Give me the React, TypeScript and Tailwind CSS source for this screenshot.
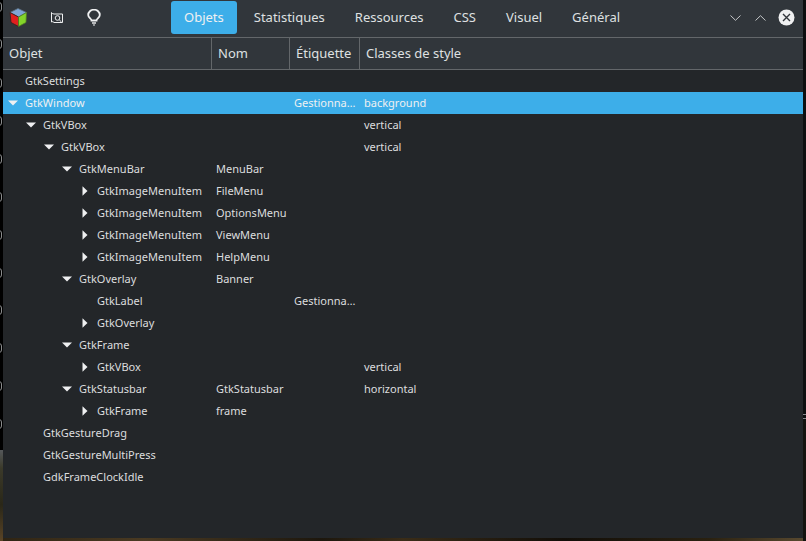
const font = { fontFamily: '"Noto Sans", sans-serif' };

type Row = {
  level: number;
  name: string;
  arrow?: "down" | "right";
  nom?: string;
  etiq?: string;
  cls?: string;
  selected?: boolean;
};

const rows: Row[] = [
  { level: 0, name: "GtkSettings" },
  { level: 0, name: "GtkWindow", arrow: "down", etiq: "Gestionna…", cls: "background", selected: true },
  { level: 1, name: "GtkVBox", arrow: "down", cls: "vertical" },
  { level: 2, name: "GtkVBox", arrow: "down", cls: "vertical" },
  { level: 3, name: "GtkMenuBar", arrow: "down", nom: "MenuBar" },
  { level: 4, name: "GtkImageMenuItem", arrow: "right", nom: "FileMenu" },
  { level: 4, name: "GtkImageMenuItem", arrow: "right", nom: "OptionsMenu" },
  { level: 4, name: "GtkImageMenuItem", arrow: "right", nom: "ViewMenu" },
  { level: 4, name: "GtkImageMenuItem", arrow: "right", nom: "HelpMenu" },
  { level: 3, name: "GtkOverlay", arrow: "down", nom: "Banner" },
  { level: 4, name: "GtkLabel", etiq: "Gestionna…" },
  { level: 4, name: "GtkOverlay", arrow: "right" },
  { level: 3, name: "GtkFrame", arrow: "down" },
  { level: 4, name: "GtkVBox", arrow: "right", cls: "vertical" },
  { level: 3, name: "GtkStatusbar", arrow: "down", nom: "GtkStatusbar", cls: "horizontal" },
  { level: 4, name: "GtkFrame", arrow: "right", nom: "frame" },
  { level: 1, name: "GtkGestureDrag" },
  { level: 1, name: "GtkGestureMultiPress" },
  { level: 1, name: "GdkFrameClockIdle" },
];

const tabs = ["Objets", "Statistiques", "Ressources", "CSS", "Visuel", "Général"];
const ringY = [2, 39, 78, 116, 154, 192, 230, 268, 305, 343, 381, 419];

function Cube() {
  return (
    <svg width="18" height="19" viewBox="0 0 18 19" className="block">
      <path d="M9 0.5 L17.5 4.5 L9.5 9 L1 4.5 Z" fill="#7fa6d4" stroke="#5b6f80" strokeWidth="0.8" />
      <path d="M1 4.5 L9.5 9 L9.5 18.5 L2 14.5 Z" fill="#e0201f" stroke="#3a2020" strokeWidth="0.9" />
      <path d="M17.5 4.5 L9.5 9 L9.5 18.5 L17 14.5 Z" fill="#83d42a" stroke="#4f7a22" strokeWidth="0.8" />
    </svg>
  );
}

function InspectIcon() {
  return (
    <svg width="14" height="14" viewBox="0 0 14 14" fill="none" stroke="#eff0f1" strokeWidth="1" className="block">
      <path d="M1.5 1.5 L1.5 11 Q3 10 4 11.5 L12.5 11.5 L12.5 3 L4 3 Q2.5 3 1.5 1.5 Z" />
      <circle cx="7.5" cy="7" r="2.3" />
      <path d="M9.2 8.8 L11.5 11" />
    </svg>
  );
}

function BulbIcon() {
  return (
    <svg width="14" height="17" viewBox="0 0 14 17" fill="none" stroke="#eff0f1" className="block">
      <path d="M4.5 11.5 C4.5 9.8 1.2 8.8 1.2 6 A5.8 5.3 0 0 1 12.8 6 C12.8 8.8 9.5 9.8 9.5 11.5 Z" strokeWidth="1.8" />
      <path d="M5 14 L9 14" strokeWidth="1.4" />
      <path d="M6 16 L8 16" strokeWidth="1.2" />
    </svg>
  );
}

function Chevron({ up }: { up?: boolean }) {
  return (
    <svg width="11" height="6" viewBox="0 0 11 6" fill="none" stroke="#c4c6c8" strokeWidth="1" className="block">
      <path d={up ? "M0.5 5.5 L5.5 0.7 L10.5 5.5" : "M0.5 0.5 L5.5 5.3 L10.5 0.5"} />
    </svg>
  );
}

function CloseIcon() {
  return (
    <svg width="17" height="17" viewBox="0 0 17 17" className="block">
      <circle cx="8.5" cy="8.5" r="8" fill="#eff0f1" />
      <path d="M5 5 L12 12 M12 5 L5 12" stroke="#31363b" strokeWidth="1.4" />
    </svg>
  );
}

function Arrow({ dir }: { dir: "down" | "right" }) {
  return (
    <svg width="10" height="10" viewBox="0 0 10 10" fill="#eff0f1" className="block">
      <path d={dir === "down" ? "M0 2.5 L10 2.5 L5 7.5 Z" : "M2.5 0.3 L7.5 5 L2.5 9.7 Z"} />
    </svg>
  );
}

export default function App() {
  return (
    <div
      style={font}
      className="relative w-[806px] h-[541px] overflow-hidden bg-[linear-gradient(90deg,#2f2413_0%,#4a3a22_18%,#1d170d_40%,#3a2c17_50%,#120e08_70%,#2a2110_88%,#5a4a30_100%)]"
    >
      <div className="absolute left-0 top-0 w-[3px] h-[450px] bg-black" />
      <div className="absolute right-0 top-0 w-[3px] h-[420px] bg-[#0d0f10]" />
      <div className="absolute left-0 top-[450px] w-[3px] h-[91px] bg-[linear-gradient(180deg,#55585a_0%,#3b3a2a_20%,#2a2718_60%,#5a4426_100%)]" />
      <div className="absolute right-0 top-[420px] w-[3px] h-[121px] bg-[#14130f]" />
      {ringY.map((y) => (
        <div
          key={y}
          style={{ top: y }}
          className="absolute left-[-4px] w-[6px] h-[10px] rounded-full border border-[#8b8d8e]"
        />
      ))}
      <div className="absolute right-0 top-[414px] w-[3px] h-[5px] border-y border-[#85878a]" />

      <div className="absolute left-[3px] top-0 w-[800px] h-[538px] flex flex-col bg-[#232629] text-[#eff0f1]">
        {/* Header bar */}
        <div className="h-[37px] shrink-0 flex items-center bg-[#31363b] text-[13px]">
          <div className="w-[168px] mb-[2px] flex items-center">
            <div className="ml-[6px]">
              <Cube />
            </div>
            <div className="ml-[23px]">
              <InspectIcon />
            </div>
            <div className="ml-[23px]">
              <BulbIcon />
            </div>
          </div>
          <div className="flex items-center gap-[4px] mb-[2px]">
            {tabs.map((t, i) => (
              <div
                key={t}
                className={
                  i === 0
                    ? "h-[33px] pt-[1px] px-[13px] flex items-center rounded-[3px] bg-[#3daee9]"
                    : "h-[33px] pt-[1px] px-[13px] flex items-center text-[#dfe0e1]"
                }
              >
                {t}
              </div>
            ))}
          </div>
          <div className="ml-auto mb-[2px] flex items-center pr-[8px]">
            <Chevron />
            <div className="ml-[14px]">
              <Chevron up />
            </div>
            <div className="ml-[12px]">
              <CloseIcon />
            </div>
          </div>
        </div>

        {/* Column headers */}
        <div className="h-[33px] shrink-0 flex bg-[#31363b] border-y border-[#63676a] text-[13px] text-[#dfe0e1]">
          <div className="w-[209px] pt-[1px] pl-[6px] flex items-center border-r border-[#63676a]">Objet</div>
          <div className="w-[78px] pt-[1px] pl-[6px] flex items-center border-r border-[#63676a]">Nom</div>
          <div className="w-[70px] pt-[1px] pl-[6px] flex items-center border-r border-[#63676a]">Étiquette</div>
          <div className="flex-1 pt-[1px] pl-[6px] flex items-center">Classes de style</div>
        </div>

        {/* Tree */}
        <div className="flex-1 flex flex-col text-[11px] text-[#dcdddf]">
          {rows.map((r, i) => (
            <div
              key={i}
              className={r.selected ? "h-[22px] shrink-0 flex items-center bg-[#3daee9] text-[#eff0f1]" : "h-[22px] shrink-0 flex items-center"}
            >
              <div className="w-[209px] flex items-center relative" style={{ paddingLeft: 22 + r.level * 18 }}>
                {r.arrow && (
                  <div className="absolute top-[3px]" style={{ left: 5 + r.level * 18 }}>
                    <Arrow dir={r.arrow} />
                  </div>
                )}
                <span className="whitespace-nowrap">{r.name}</span>
              </div>
              <div className="w-[78px] pl-[4px] whitespace-nowrap">{r.nom}</div>
              <div className="w-[70px] pl-[4px] whitespace-nowrap">{r.etiq}</div>
              <div className="flex-1 pl-[4px] whitespace-nowrap">{r.cls}</div>
            </div>
          ))}
        </div>
      </div>
    </div>
  );
}
